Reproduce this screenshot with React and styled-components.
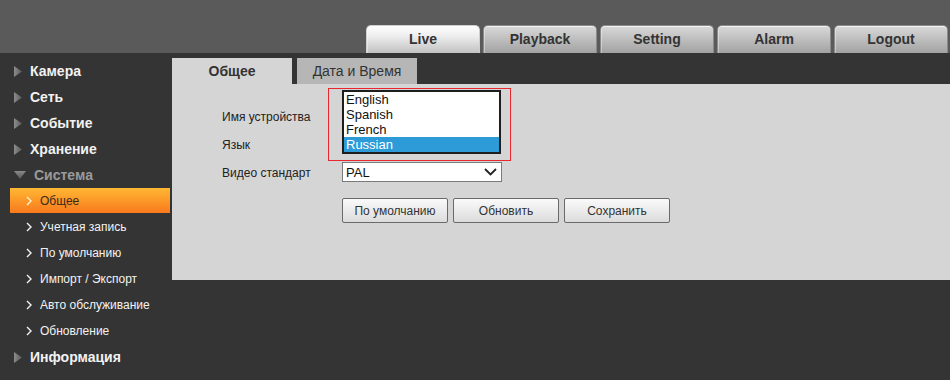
import React from "react";
import styled, { createGlobalStyle, css } from "styled-components";

const Global = createGlobalStyle`
  html, body { margin: 0; padding: 0; background: #343434; }
  body { font-family: "Liberation Sans", Arial, sans-serif; }
  * { box-sizing: border-box; }
`;

const Page = styled.div`
  width: 950px;
  height: 380px;
  background: #343434;
  display: flex;
  flex-direction: column;
  overflow: hidden;
`;

const Header = styled.header`
  height: 53px;
  background: #5a5a5a;
  display: flex;
  justify-content: flex-end;
  align-items: flex-end;
  gap: 3px;
  padding-right: 2px;
`;

const TopTab = styled.div`
  width: 114px;
  height: 28px;
  border-radius: 5px 5px 0 0;
  display: flex;
  align-items: center;
  justify-content: center;
  padding-bottom: 1px;
  font-size: 14px;
  font-weight: bold;
  color: #333;
  border: 1px solid #8a8a8a;
  border-bottom: none;
  box-shadow: inset 0 1px 0 rgba(255,255,255,0.7), inset 1px 0 0 rgba(255,255,255,0.35);
  background: linear-gradient(#d9d9d9, #a2a2a2);
  ${(p) =>
    p.$active &&
    css`
      background: linear-gradient(#ffffff 0%, #ececec 40%, #c2c2c2 100%);
      border-color: #cfcfcf;
    `}
`;

const Body = styled.div`
  flex: 1;
  display: flex;
  padding-top: 5px;
`;

const Sidebar = styled.nav`
  width: 172px;
  display: flex;
  flex-direction: column;
`;

const MainItem = styled.div`
  height: 26px;
  display: flex;
  align-items: center;
  padding-left: 14px;
  gap: 8px;
  font-size: 14px;
  font-weight: bold;
  color: ${(p) => (p.$open ? "#9a9a9a" : "#f2f2f2")};
`;

const SubItem = styled.div`
  height: 26px;
  margin: 0 2px 0 10px;
  display: flex;
  align-items: center;
  padding-left: 16px;
  gap: 8px;
  font-size: 12px;
  color: ${(p) => (p.$active ? "#3a2a1a" : "#f2f2f2")};
  ${(p) =>
    p.$active &&
    css`
      height: 25px;
      margin-bottom: 1px;
      background: linear-gradient(#ffb834, #f8791c);
    `}
`;

const Content = styled.main`
  width: 778px;
  height: 222px;
  display: flex;
  flex-direction: column;
`;

const TabRow = styled.div`
  display: flex;
  gap: 5px;
  height: 26px;
`;

const PanelTab = styled.div`
  width: 120px;
  display: flex;
  align-items: center;
  justify-content: center;
  font-size: 14px;
  color: #333;
  background: ${(p) => (p.$active ? "#d5d5d5" : "#b6b6b6")};
  font-weight: ${(p) => (p.$active ? "bold" : "normal")};
`;

const Panel = styled.section`
  flex: 1;
  background: #d5d5d5;
  padding: 18px 0 0 50px;
`;

const Form = styled.div`
  display: grid;
  grid-template-columns: 120px 160px;
  grid-auto-rows: 28px;
  align-items: center;
`;

const Label = styled.div`
  font-size: 12px;
  color: #222;
  padding-top: 2px;
`;

const Cell = styled.div`
  position: relative;
  height: 100%;
`;

const Highlight = styled.div`
  position: absolute;
  left: -14px;
  top: -14px;
  width: 183px;
  height: 73px;
  border: 1px solid #e8272e;
  padding: 1px 0 0 13px;
  z-index: 2;
`;

const ListBox = styled.ul`
  list-style: none;
  margin: 0;
  width: 159px;
  height: 64px;
  border: 2px solid #1e1e1e;
  background: #fff;
  padding: 0;
  display: flex;
  flex-direction: column;
  justify-content: flex-end;
`;

const Option = styled.li`
  height: 15px;
  line-height: 15px;
  font-size: 13px;
  padding-left: 2px;
  color: ${(p) => (p.$selected ? "#fff" : "#111")};
  background: ${(p) => (p.$selected ? "#2c9bd8" : "transparent")};
`;

const Select = styled.div`
  width: 160px;
  height: 20px;
  border: 1px solid #7a7a7a;
  background: #fff;
  display: flex;
  align-items: center;
  justify-content: space-between;
  padding: 0 4px 0 3px;
  font-size: 13px;
  color: #111;
`;

const Buttons = styled.div`
  display: flex;
  gap: 5px;
  margin: 12px 0 0 120px;
`;

const Button = styled.button`
  width: 106px;
  height: 25px;
  border: 1px solid #6a6a6a;
  border-radius: 2px;
  background: linear-gradient(#fafafa, #dcdcdc);
  font-family: "Liberation Sans", Arial, sans-serif;
  font-size: 12px;
  color: #333;
  padding: 0;
`;

const Tri = ({ down }) =>
  down ? (
    <svg width="12" height="8" viewBox="0 0 12 8">
      <defs>
        <linearGradient id="gd" x1="0" y1="0" x2="0" y2="1">
          <stop offset="0" stopColor="#8a8a8a" />
          <stop offset="1" stopColor="#555" />
        </linearGradient>
      </defs>
      <polygon points="0,0 12,0 6,8" fill="url(#gd)" />
    </svg>
  ) : (
    <svg width="8" height="11" viewBox="0 0 8 11">
      <defs>
        <linearGradient id="gr" x1="0" y1="0" x2="1" y2="0">
          <stop offset="0" stopColor="#8c8c8c" />
          <stop offset="1" stopColor="#5a5a5a" />
        </linearGradient>
      </defs>
      <polygon points="0,0 8,5.5 0,11" fill="url(#gr)" />
    </svg>
  );

const Chevron = ({ color }) => (
  <svg width="6" height="10" viewBox="0 0 6 10">
    <polyline points="1,1 5,5 1,9" fill="none" stroke={color} strokeWidth="1.4" />
  </svg>
);

const mains1 = ["Камера", "Сеть", "Событие", "Хранение"];
const subs = ["Общее", "Учетная запись", "По умолчанию", "Импорт / Экспорт", "Авто обслуживание", "Обновление"];

export default function App() {
  return (
    <Page>
      <Global />
      <Header>
        {["Live", "Playback", "Setting", "Alarm", "Logout"].map((t, i) => (
          <TopTab key={t} $active={i === 0}>{t}</TopTab>
        ))}
      </Header>
      <Body>
        <Sidebar>
          {mains1.map((m) => (
            <MainItem key={m}><Tri />{m}</MainItem>
          ))}
          <MainItem $open><Tri down />Система</MainItem>
          {subs.map((s, i) => (
            <SubItem key={s} $active={i === 0}>
              <Chevron color={i === 0 ? "#fff3d0" : "#f2f2f2"} />
              {s}
            </SubItem>
          ))}
          <MainItem><Tri />Информация</MainItem>
        </Sidebar>
        <Content>
          <TabRow>
            <PanelTab $active>Общее</PanelTab>
            <PanelTab>Дата и Время</PanelTab>
          </TabRow>
          <Panel>
            <Form>
              <Label>Имя устройства</Label>
              <Cell>
                <Highlight>
                  <ListBox role="listbox">
                    <Option>English</Option>
                    <Option>Spanish</Option>
                    <Option>French</Option>
                    <Option $selected>Russian</Option>
                  </ListBox>
                </Highlight>
              </Cell>
              <Label>Язык</Label>
              <Cell />
              <Label>Видео стандарт</Label>
              <Select>
                PAL
                <svg width="13" height="8" viewBox="0 0 13 8">
                  <polyline points="1,1 6.5,6.5 12,1" fill="none" stroke="#222" strokeWidth="1.8" />
                </svg>
              </Select>
            </Form>
            <Buttons>
              <Button>По умолчанию</Button>
              <Button>Обновить</Button>
              <Button>Сохранить</Button>
            </Buttons>
          </Panel>
        </Content>
      </Body>
    </Page>
  );
}
